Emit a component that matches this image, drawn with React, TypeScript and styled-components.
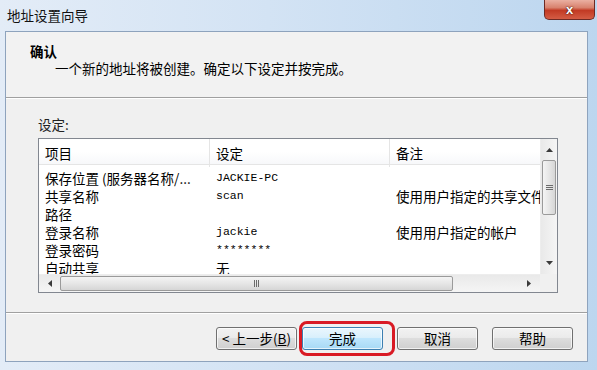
import React from "react";
import styled, { createGlobalStyle } from "styled-components";

const Global = createGlobalStyle`
  html, body { margin: 0; padding: 0; }
  body { width: 597px; height: 370px; overflow: hidden; background: #c9dcf0;
    font-family: "Noto Sans CJK SC", "Liberation Sans", sans-serif; }
`;

const Window = styled.div`
  width: 597px;
  height: 370px;
  box-sizing: border-box;
  display: flex;
  flex-direction: column;
  background: linear-gradient(90deg, #e3ecf7 0%, #d3e3f4 45%, #bcd6ef 100%);
  padding: 0 9px 8px 5px;
`;

const TitleBar = styled.div`
  height: 31px;
  display: flex;
  align-items: flex-start;
  justify-content: space-between;
  flex-shrink: 0;
`;

const Title = styled.div`
  font-size: 13.5px;
  line-height: 16px;
  color: #111;
  margin-top: 7px;
  margin-left: 2px;
`;

const CloseBtn = styled.div`
  width: 51px;
  height: 20px;
  margin-right: -7px;
  box-sizing: border-box;
  border: 1px solid #6d2a24;
  border-top: none;
  border-radius: 0 0 5px 5px;
  background: linear-gradient(180deg, #eab0a2 0%, #d8826e 40%, #c23a24 55%, #d45c44 100%);
  display: flex;
  align-items: center;
  justify-content: center;
  color: #fff;
  font-family: "Liberation Sans", sans-serif;
  font-weight: bold;
  font-size: 13px;
  text-shadow: 0 0 2px #4a1a10, 0 0 1px #4a1a10;
`;

const Content = styled.div`
  flex: 1;
  background: #f0f0f0;
  border: 1px solid #8ea3bd;
  display: flex;
  flex-direction: column;
  min-height: 0;
`;

const Header = styled.div`
  height: 66px;
  box-sizing: border-box;
  background: #f2f2f2;
  border-bottom: 1px solid #a0a0a0;
  box-shadow: 0 1px 0 #ffffff;
  padding: 11px 0 0 24px;
`;

const HeaderTitle = styled.div`
  font-weight: bold;
  font-size: 13.5px;
  line-height: 17px;
  color: #000;
`;

const HeaderSub = styled.div`
  font-size: 13.5px;
  line-height: 17px;
  color: #000;
  padding-left: 25px;
`;

const Main = styled.div`
  padding: 18px 0 0 32px;
  display: flex;
  flex-direction: column;
`;

const Label = styled.div`
  font-size: 13.5px;
  line-height: 16px;
  color: #222;
  height: 22px;
`;

const ListBox = styled.div`
  width: 520px;
  height: 155px;
  box-sizing: border-box;
  border: 1px solid #828790;
  background: #fff;
  display: grid;
  grid-template-columns: 1fr 17px;
  grid-template-rows: 1fr 18px;
`;

const ListArea = styled.div`
  overflow: hidden;
`;

const HeadRow = styled.div`
  display: grid;
  grid-template-columns: 171px 180px 200px;
  height: 25px;
  border-bottom: 1px solid #e5e5e5;
  background: linear-gradient(180deg, #ffffff 0%, #ffffff 50%, #f7f8fa 100%);
`;

const HeadCell = styled.div`
  font-size: 13.5px;
  line-height: 28px;
  padding-left: 6px;
  color: #000;
  border-right: 1px solid #e5e5e5;
  white-space: nowrap;
`;

const Rows = styled.div`
  padding-top: 4px;
`;

const Row = styled.div`
  display: grid;
  grid-template-columns: 171px 180px 200px;
  height: 18px;
`;

const Cell = styled.div<{ $mono?: boolean }>`
  font-size: ${(p) => (p.$mono ? "11.5px" : "13.5px")};
  font-family: ${(p) =>
    p.$mono
      ? `"Liberation Mono", "Noto Sans CJK SC", monospace`
      : `"Noto Sans CJK SC", "Liberation Sans", sans-serif`};
  line-height: 18px;
  padding-left: 6px;
  color: #000;
  white-space: nowrap;
  overflow: hidden;
`;

const VScroll = styled.div`
  background: linear-gradient(90deg, #e9e9e9, #f5f5f5);
  display: flex;
  flex-direction: column;
  align-items: center;
  border-left: 1px solid #ededed;
`;

const HScroll = styled.div`
  background: linear-gradient(180deg, #e9e9e9, #f5f5f5);
  display: flex;
  align-items: center;
  border-top: 1px solid #ededed;
`;

const Corner = styled.div`
  background: #f0f0f0;
`;

const Fill = styled.div`
  flex: 1;
`;

const ArrowBox = styled.div<{ $w: number; $h: number }>`
  width: ${(p) => p.$w}px;
  height: ${(p) => p.$h}px;
  display: flex;
  align-items: center;
  justify-content: center;
  flex-shrink: 0;
`;

const VThumb = styled.div`
  width: 14px;
  height: 55px;
  box-sizing: border-box;
  border: 1px solid #9a9a9a;
  border-radius: 2px;
  background: linear-gradient(90deg, #f4f4f4 0%, #e6e6e6 50%, #d6d6d6 100%);
  display: flex;
  align-items: center;
  justify-content: center;
`;

const HThumb = styled.div`
  width: 393px;
  height: 15px;
  box-sizing: border-box;
  border: 1px solid #9a9a9a;
  border-radius: 2px;
  background: linear-gradient(180deg, #f4f4f4 0%, #e6e6e6 50%, #d6d6d6 100%);
  display: flex;
  align-items: center;
  justify-content: center;
`;

const Separator = styled.div`
  margin-top: 19px;
  height: 1px;
  background: #a0a0a0;
  box-shadow: 0 1px 0 #fff;
`;

const ButtonRow = styled.div`
  display: flex;
  align-items: center;
  padding: 8px 0 0 210px;
`;

const Button = styled.div<{ $default?: boolean }>`
  width: 81px;
  height: 23px;
  box-sizing: border-box;
  border: 1px solid ${(p) => (p.$default ? "#3c7fb1" : "#707070")};
  border-radius: 3px;
  background: ${(p) =>
    p.$default
      ? "linear-gradient(180deg, #eaf6fd 0%, #d9f0fc 45%, #bee6fd 50%, #a7d9f5 100%)"
      : "linear-gradient(180deg, #f2f2f2 0%, #ebebeb 45%, #dddddd 50%, #cfcfcf 100%)"};
  box-shadow: inset 0 0 0 1px rgba(255, 255, 255, 0.7);
  font-size: 13.5px;
  line-height: 21px;
  text-align: center;
  color: #000;
  white-space: nowrap;
`;

const Highlight = styled.div`
  margin-left: 2px;
  margin-right: 2px;
  padding: 3px 9px 3px 0;
  border: 3px solid #d91a24;
  border-radius: 8px;
`;

const Spacer = styled.div<{ $w: number }>`
  width: ${(p) => p.$w}px;
  flex-shrink: 0;
`;

const Accel = styled.span`
  text-decoration: underline;
`;

const Tri = ({ dir }: { dir: "up" | "down" | "left" | "right" }) => {
  const pts = {
    up: "0,4 3.5,0 7,4",
    down: "0,0 7,0 3.5,4",
    left: "4,0 4,7 0,3.5",
    right: "0,0 4,3.5 0,7",
  }[dir];
  const vertical = dir === "up" || dir === "down";
  return (
    <svg width={vertical ? 7 : 4} height={vertical ? 4 : 7}>
      <polygon points={pts} fill="#3a3a3a" />
    </svg>
  );
};

const Grip = ({ vertical }: { vertical?: boolean }) => (
  <svg width={7} height={7}>
    {vertical
      ? [1, 3, 5].map((y) => <line key={y} x1={0} x2={7} y1={y + 0.5} y2={y + 0.5} stroke="#6b6b6b" />)
      : [1, 3, 5].map((x) => <line key={x} y1={0} y2={7} x1={x + 0.5} x2={x + 0.5} stroke="#6b6b6b" />)}
  </svg>
);

const rows: [string, string, string][] = [
  ["保存位置 (服务器名称/...", "JACKIE-PC", ""],
  ["共享名称", "scan", "使用用户指定的共享文件夹"],
  ["路径", "", ""],
  ["登录名称", "jackie", "使用用户指定的帐户"],
  ["登录密码", "********", ""],
  ["自动共享", "无", ""],
];

export default function App() {
  return (
    <>
      <Global />
      <Window>
        <TitleBar>
          <Title>地址设置向导</Title>
          <CloseBtn>x</CloseBtn>
        </TitleBar>
        <Content>
          <Header>
            <HeaderTitle>确认</HeaderTitle>
            <HeaderSub>一个新的地址将被创建。确定以下设定并按完成。</HeaderSub>
          </Header>
          <Main>
            <Label>设定:</Label>
            <ListBox>
              <ListArea>
                <HeadRow>
                  <HeadCell>项目</HeadCell>
                  <HeadCell>设定</HeadCell>
                  <HeadCell>备注</HeadCell>
                </HeadRow>
                <Rows>
                  {rows.map((r, i) => (
                    <Row key={i}>
                      <Cell>{r[0]}</Cell>
                      <Cell $mono={r[1] !== "无"}>{r[1]}</Cell>
                      <Cell>{r[2]}</Cell>
                    </Row>
                  ))}
                </Rows>
              </ListArea>
              <VScroll>
                <ArrowBox $w={17} $h={21}>
                  <Tri dir="up" />
                </ArrowBox>
                <VThumb>
                  <Grip vertical />
                </VThumb>
                <Fill />
                <ArrowBox $w={17} $h={22}>
                  <Tri dir="down" />
                </ArrowBox>
              </VScroll>
              <HScroll>
                <ArrowBox $w={21} $h={17}>
                  <Tri dir="left" />
                </ArrowBox>
                <HThumb>
                  <Grip />
                </HThumb>
                <Fill />
                <ArrowBox $w={22} $h={17}>
                  <Tri dir="right" />
                </ArrowBox>
              </HScroll>
              <Corner />
            </ListBox>
          </Main>
          <Separator />
          <ButtonRow>
            <Button>
              &lt; 上一步(<Accel>B</Accel>)
            </Button>
            <Highlight>
              <Button $default>完成</Button>
            </Highlight>
            <Button>取消</Button>
            <Spacer $w={14} />
            <Button>帮助</Button>
          </ButtonRow>
        </Content>
      </Window>
    </>
  );
}
